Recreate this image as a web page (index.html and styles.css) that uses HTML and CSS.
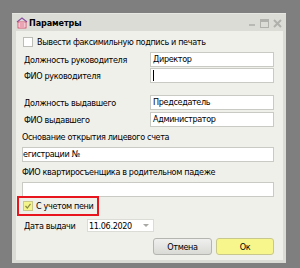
FILE: index.html
```html
<!DOCTYPE html>
<html lang="ru">
<head>
  <meta charset="UTF-8">
  <title>Параметры</title>
  <link rel="stylesheet" href="styles.css">
</head>
<body>
  <div class="dialog">
    <div class="titlebar">
      <svg class="app-icon" width="12" height="12" viewBox="0 0 12 12">
        <path d="M1 5 L6 1 L11 5" fill="none" stroke="#8a4fa0" stroke-width="1.2"/>
        <rect x="2" y="5" width="8" height="6" fill="#fbe9ee" stroke="#d23a5a" stroke-width="0.8"/>
        <path d="M3.5 7 h5 M3.5 9 h5" stroke="#d23a5a" stroke-width="0.8"/>
      </svg>
      <span class="title">Параметры</span>
      <div class="win-buttons">
        <svg width="8" height="8" viewBox="0 0 8 8"><rect x="1" y="5" width="6" height="2" fill="#b8b8b4"/></svg>
        <svg width="9" height="9" viewBox="0 0 9 9"><rect x="0.5" y="0.5" width="8" height="8" fill="none" stroke="#b0b0ac"/><rect x="1" y="1" width="7" height="2" fill="#b0b0ac"/></svg>
        <svg width="9" height="9" viewBox="0 0 9 9"><path d="M1 1 L8 8 M8 1 L1 8" stroke="#b0b0ac" stroke-width="2"/></svg>
      </div>
    </div>

    <div class="panel">
      <label class="check-row">
        <span class="checkbox"></span>
        <span>Вывести факсимильную подпись и печать</span>
      </label>

      <div class="field-row first">
        <span class="label">Должность руководителя</span>
        <div class="input">Директор</div>
      </div>
      <div class="field-row tight">
        <span class="label">ФИО руководителя</span>
        <div class="input"><span class="caret"></span></div>
      </div>

      <div class="field-row group">
        <span class="label">Должность выдавшего</span>
        <div class="input">Председатель</div>
      </div>
      <div class="field-row near">
        <span class="label">ФИО выдавшего</span>
        <div class="input">Администратор</div>
      </div>

      <div class="caption">Основание открытия лицевого счета</div>
      <div class="input wide clip">егистрации №</div>

      <div class="caption">ФИО квартиросъенщика в родительном падеже</div>
      <div class="input wide"></div>

      <label class="check-row highlight">
        <span class="checkbox checked">
          <svg width="8" height="8" viewBox="0 0 8 8"><path d="M1.5 4 L3.3 6 L6.5 1.8" fill="none" stroke="#8c8c40" stroke-width="1.2"/></svg>
        </span>
        <span>С учетом пени</span>
      </label>

      <div class="date-row">
        <span class="date-label">Дата выдачи</span>
        <div class="date-input">
          <span>11.06.2020</span>
          <span class="arrow"></span>
        </div>
      </div>

      <div class="buttons">
        <button class="btn">Отмена</button>
        <button class="btn ok">Ок</button>
      </div>
    </div>
  </div>
</body>
</html>
```

FILE: styles.css
```css
* {
  margin: 0;
  padding: 0;
  box-sizing: border-box;
}

body {
  background: #7f7f7f;
  font-family: 'DejaVu Sans Condensed', 'Liberation Sans', sans-serif;
  font-size: 9px;
  letter-spacing: -0.35px;
  color: #000;
  padding: 13px 0 0 12px;
  white-space: nowrap;
}

.dialog {
  width: 274px;
  height: 250px;
  background: #dcdcd7;
  border-top: 1px solid #e6e6e2;
  display: flex;
  flex-direction: column;
}

.titlebar {
  height: 17px;
  display: flex;
  align-items: center;
  padding: 0 4px 0 4px;
}

.app-icon {
  margin-right: 1px;
}

.title {
  font-weight: bold;
  letter-spacing: -0.1px;
}

.win-buttons {
  margin-left: auto;
  display: flex;
  align-items: center;
  gap: 4px;
  padding-top: 1px;
}

.panel {
  flex: 1;
  margin: 0 3px 3px 4px;
  background: #f0f0eb;
  padding: 0 9px 0 6px;
  display: flex;
  flex-direction: column;
}

.check-row {
  display: flex;
  align-items: center;
  margin-top: 6px;
  height: 10px;
  padding-left: 1px;
}

.checkbox {
  width: 10px;
  height: 10px;
  background: #fff;
  border: 1px solid #bdbdb8;
  margin-right: 4px;
  display: flex;
  align-items: center;
  justify-content: center;
}

.field-row {
  display: flex;
  height: 15px;
  align-items: center;
}

.field-row.first { margin-top: 5px; }
.field-row.tight { margin-top: 1px; }
.field-row.group { margin-top: 12px; }
.field-row.near { margin-top: 2px; }

.label {
  width: 128px;
  padding-left: 2px;
}

.input {
  flex: 1;
  height: 15px;
  background: #fff;
  border: 1px solid #cacac5;
  padding: 0 2px;
  line-height: 13px;
  overflow: hidden;
}

.input.wide {
  flex: none;
  margin-top: 3px;
}

.clip {
  padding-left: 0;
}

.caret {
  display: inline-block;
  width: 1px;
  height: 11px;
  background: #000;
  vertical-align: middle;
}

.caption {
  margin-top: 4px;
  height: 13px;
  line-height: 13px;
}

.check-row.highlight {
  margin: -1px 0 0 -5px;
  width: 82px;
  height: 20px;
  border: 2px solid #e8141e;
  padding-left: 4px;
}

.checkbox.checked {
  background: #f4f48c;
  border-color: #c9c98a;
  margin-right: 3px;
}

.date-row {
  display: flex;
  align-items: center;
  margin-top: 3px;
  height: 13px;
}

.date-label {
  width: 65px;
  padding-left: 2px;
}

.date-input {
  width: 67px;
  height: 13px;
  background: #fff;
  border: 1px solid #dcdcd7;
  display: flex;
  align-items: center;
  padding-left: 1px;
}

.arrow {
  margin-left: auto;
  margin-right: 4px;
  border-left: 3px solid transparent;
  border-right: 3px solid transparent;
  border-top: 3px solid #a8a8a4;
}

.buttons {
  display: flex;
  justify-content: flex-end;
  gap: 4px;
  margin-top: 6px;
}

.btn {
  width: 59px;
  height: 17px;
  font-family: inherit;
  font-size: 9px;
  letter-spacing: -0.35px;
  color: #000;
  border: 1px solid #b4b4b0;
  border-radius: 3px;
  background: linear-gradient(#f0f0ee, #d9d9d6);
}

.btn.ok {
  width: 58px;
  background: #f6f68c;
  border-color: #c8c88c;
}
```
